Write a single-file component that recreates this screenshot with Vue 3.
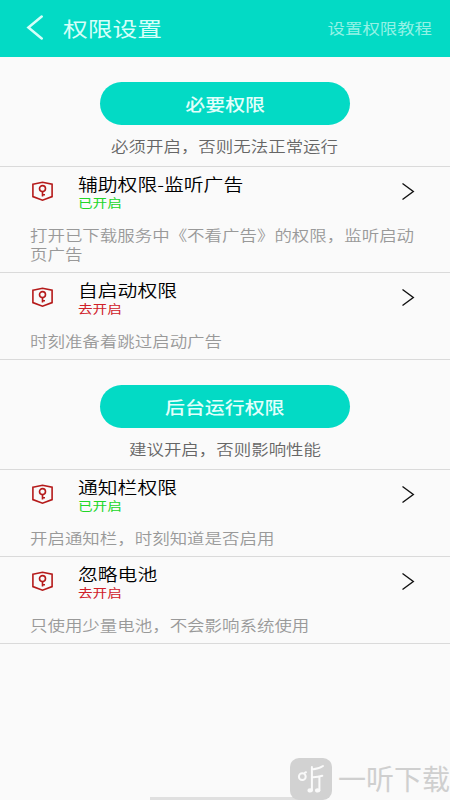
<script setup>
const groups = [
  {
    title: '必要权限',
    note: '必须开启，否则无法正常运行',
    items: [
      { name: '辅助权限-监听广告', on: true, desc: '打开已下载服务中《不看广告》的权限，监听启动页广告' },
      { name: '自启动权限', on: false, desc: '时刻准备着跳过启动广告' }
    ]
  },
  {
    title: '后台运行权限',
    note: '建议开启，否则影响性能',
    items: [
      { name: '通知栏权限', on: true, desc: '开启通知栏，时刻知道是否启用' },
      { name: '忽略电池', on: false, desc: '只使用少量电池，不会影响系统使用' }
    ]
  }
]
</script>

<template>
  <div class="screen">
    <header class="bar">
      <svg class="back" width="18" height="26" viewBox="0 0 18 26">
        <path d="M15.7 1.5 L2.4 12.5 L15.7 23.5" />
      </svg>
      <h1 class="wide">权限设置</h1>
      <a class="help wide">设置权限教程</a>
    </header>

    <section v-for="g in groups" :key="g.title" class="group">
      <div class="pill"><span class="wide">{{ g.title }}</span></div>
      <p class="note"><span class="wide">{{ g.note }}</span></p>
      <div class="list">
        <div v-for="item in g.items" :key="item.name" class="row">
          <div class="head">
            <svg class="shield" width="23" height="22" viewBox="0 0 23 22">
              <path d="M1.9 4.2 L11.5 2.3 L21.1 4.2 V16.6 L11.5 20.2 L1.9 16.6 Z" />
              <circle cx="11.5" cy="8.6" r="3" />
              <path d="M11.5 11.6 V16.4 M11.5 14.7 H14" />
            </svg>
            <div class="labels">
              <div class="name wide">{{ item.name }}</div>
              <div class="state wide" :class="{ on: item.on }">{{ item.on ? '已开启' : '去开启' }}</div>
            </div>
            <svg class="go" width="14" height="20" viewBox="0 0 14 20">
              <path d="M1.5 1.5 L12.3 9.5 L1.5 17.5" />
            </svg>
          </div>
          <p class="desc wide">{{ item.desc }}</p>
        </div>
      </div>
    </section>

    <div class="gesture"></div>
    <div class="mark">
      <svg width="42" height="42" viewBox="0 0 42 42">
        <rect width="42" height="42" rx="9" fill="#d2d2d2" />
        <g fill="none" stroke="#fafafa" stroke-width="2" stroke-linecap="round">
          <circle cx="12.3" cy="18.7" r="3.4" />
          <path d="M15 14.6 L16 14.2" />
          <path d="M21.9 9 V32 M21.9 11.4 Q28.5 11 33 8" />
          <path d="M21.9 19.2 Q27.5 19.4 32.3 17.8 M29.4 19 V32" />
        </g>
        <ellipse cx="20.2" cy="32.4" rx="2.7" ry="2.1" fill="#fafafa" />
        <ellipse cx="27.7" cy="32.4" rx="2.7" ry="2.1" fill="#fafafa" />
      </svg>
      <span class="brand">一听下载</span>
    </div>
  </div>
</template>

<style>
body {
  margin: 0;
  background: #fafafa;
}
</style>

<style scoped>
.screen {
  position: relative;
  width: 450px;
  height: 800px;
  overflow: hidden;
  background: #fafafa;
  font-family: "Noto Sans CJK SC", sans-serif;
  font-weight: 350;
}
.wide {
  display: inline-block;
  white-space: nowrap;
  transform: scaleX(1.2);
  transform-origin: left center;
}
h1, p {
  margin: 0;
}
.bar {
  display: flex;
  align-items: center;
  box-sizing: border-box;
  height: 57px;
  padding: 0 18px 2px 26px;
  background: #03dac5;
  color: #d5fff9;
}
.back {
  fill: none;
  stroke: #d5fff9;
  stroke-width: 2.5;
  stroke-linecap: round;
}
h1 {
  margin-left: 19px;
  font-size: 20.6px;
  font-weight: 400;
  line-height: 30px;
}
.help {
  margin-left: auto;
  transform-origin: right center;
  color: #93f2e5;
  font-size: 14.5px;
  font-weight: 400;
}
.group {
  display: flex;
  flex-direction: column;
  align-items: center;
  padding-top: 25px;
}
.pill {
  display: flex;
  align-items: center;
  justify-content: center;
  width: 250px;
  height: 43px;
  border-radius: 22px;
  background: #03dac5;
  color: #e2fffb;
  font-size: 16.6px;
  font-weight: 500;
}
.pill .wide, .note .wide {
  transform-origin: center;
}
.note {
  margin: 10px 0;
  height: 21px;
  line-height: 21px;
  font-size: 14.55px;
  color: #666;
}
.list {
  width: 100%;
  border-bottom: 1px solid #dadada;
}
.row {
  border-top: 1px solid #dadada;
  padding: 6px 35px 9px 30px;
}
.head {
  display: flex;
  align-items: flex-start;
}
.shield {
  margin: 7px 24px 0 1px;
  fill: none;
  stroke: #b51a1a;
  stroke-width: 1.6;
}
.labels {
  display: flex;
  flex-direction: column;
  align-items: flex-start;
}
.name {
  line-height: 22px;
  font-size: 16.5px;
  color: #000;
}
.state {
  line-height: 17px;
  font-size: 12.2px;
  font-weight: 400;
  color: #d02028;
}
.state.on {
  color: #20d628;
}
.go {
  margin: 9px 0 0 auto;
  fill: none;
  stroke: #111;
  stroke-width: 1.4;
}
.desc {
  display: block;
  width: 322px;
  margin-top: 13px;
  white-space: normal;
  line-height: 19px;
  font-size: 14.55px;
  color: #999;
}
.gesture {
  position: absolute;
  left: 150px;
  bottom: 0;
  width: 150px;
  height: 3px;
  background: #e0e0e0;
}
.mark {
  position: absolute;
  left: 290px;
  top: 758px;
  display: flex;
  align-items: center;
  gap: 6px;
}
.brand {
  font-size: 28px;
  line-height: 40px;
  padding-bottom: 2px;
  color: #cfcfcf;
  font-weight: 400;
  white-space: nowrap;
}
</style>
